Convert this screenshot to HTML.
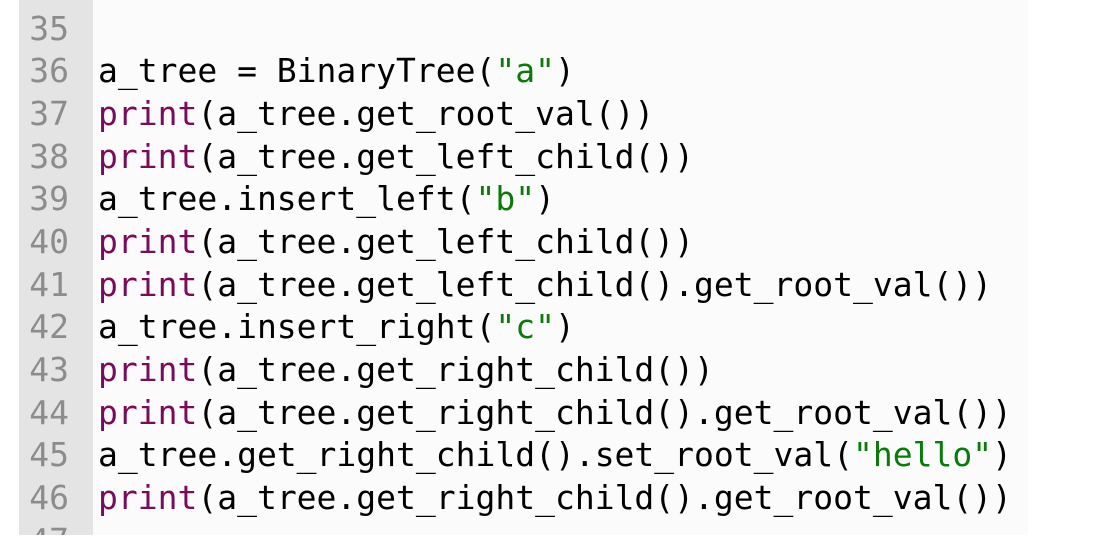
<!DOCTYPE html>
<html><head><style>
html,body{margin:0;padding:0;background:#fff;width:1111px;height:543px;overflow:hidden}
.ed{position:absolute;left:19px;top:0;width:1009px;height:535px;background:#fbfbfb;overflow:hidden}
.g{position:absolute;left:0;top:0;width:74px;height:535px;background:#e4e4e4}
.l{position:absolute;left:0;height:43px;line-height:43px;font-family:"DejaVu Sans Mono","Liberation Mono",monospace;font-size:33px;white-space:pre;color:#000}
.n{width:50px;text-align:right;color:#8c8c8c}
.c{left:79px}
.p{color:#7a0a5a}.s{color:#0a7a0a}
</style></head><body><div class="ed"><div class="g"></div>
<div class="l n" style="top:7px">35</div>
<div class="l n" style="top:49px">36</div><div class="l c" style="top:49px">a_tree = BinaryTree(<span class="s">"a"</span>)</div>
<div class="l n" style="top:92px">37</div><div class="l c" style="top:92px"><span class="p">print</span>(a_tree.get_root_val())</div>
<div class="l n" style="top:135px">38</div><div class="l c" style="top:135px"><span class="p">print</span>(a_tree.get_left_child())</div>
<div class="l n" style="top:177px">39</div><div class="l c" style="top:177px">a_tree.insert_left(<span class="s">"b"</span>)</div>
<div class="l n" style="top:220px">40</div><div class="l c" style="top:220px"><span class="p">print</span>(a_tree.get_left_child())</div>
<div class="l n" style="top:263px">41</div><div class="l c" style="top:263px"><span class="p">print</span>(a_tree.get_left_child().get_root_val())</div>
<div class="l n" style="top:305px">42</div><div class="l c" style="top:305px">a_tree.insert_right(<span class="s">"c"</span>)</div>
<div class="l n" style="top:348px">43</div><div class="l c" style="top:348px"><span class="p">print</span>(a_tree.get_right_child())</div>
<div class="l n" style="top:391px">44</div><div class="l c" style="top:391px"><span class="p">print</span>(a_tree.get_right_child().get_root_val())</div>
<div class="l n" style="top:433px">45</div><div class="l c" style="top:433px">a_tree.get_right_child().set_root_val(<span class="s">"hello"</span>)</div>
<div class="l n" style="top:476px">46</div><div class="l c" style="top:476px"><span class="p">print</span>(a_tree.get_right_child().get_root_val())</div>
<div class="l n" style="top:519px">47</div>
</div></body></html>
